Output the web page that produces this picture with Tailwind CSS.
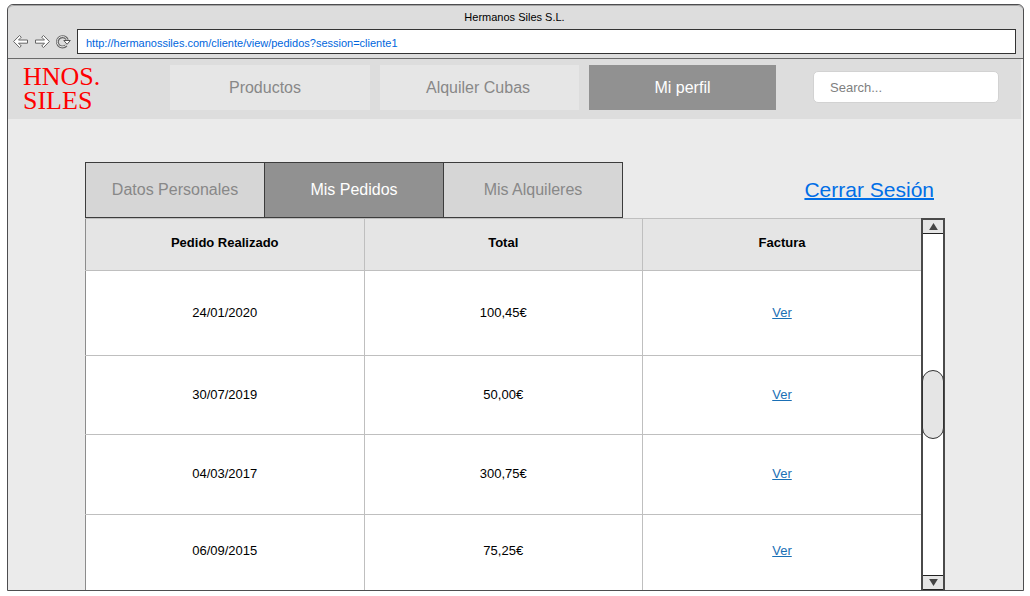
<!DOCTYPE html>
<html lang="es">
<head>
<meta charset="utf-8">
<title>Hermanos Siles S.L.</title>
<script src="https://cdn.jsdelivr.net/npm/@tailwindcss/browser@4"></script>
</head>
<body class="flex min-h-screen bg-white pt-1 pr-[6px] pb-[5px] pl-[7px] font-['Liberation_Sans',Arial,sans-serif] text-black">
<div class="flex flex-1 flex-col rounded-t-md border border-[#4d4d4f] bg-[#ebebeb]">
  <header class="rounded-t-md border-b border-[#6a6a6a] border-t border-t-[#a5a5a5] bg-[#dddddd] pr-[7px] pb-1 pl-[5px]">
    <p class="h-[23px] pt-[3px] text-center text-[11px] leading-4">Hermanos Siles S.L.</p>
    <div class="flex items-center">
      <button type="button" aria-label="Atrás" class="w-[21px]">
        <svg class="h-4 w-4" viewBox="0 0 16 16" fill="#fff" stroke="#666" stroke-width="1" stroke-linejoin="round"><path d="M6.500 1.500 .6 7.500l5.900 6L8.300 12 5.500 9.200H14.500V6H5.500l2.800-2.800z"/></svg>
      </button>
      <button type="button" aria-label="Adelante" class="w-[21px]">
        <svg class="h-4 w-4" viewBox="0 0 16 16" fill="#fff" stroke="#666" stroke-width="1" stroke-linejoin="round"><path d="M9.500 1.500l5.900 6-5.900 6L7.700 12l2.800-2.800H1.500V6h9L7.700 3.200z"/></svg>
      </button>
      <button type="button" aria-label="Recargar" class="w-[22px]">
        <svg class="h-4 w-4" viewBox="0 0 16 16" fill="none"><path d="M11.300 11.500A5.200 5.200 0 1 1 12.400 6" stroke="#666" stroke-width="3"/><path d="M11.100 11.300A5.200 5.200 0 1 1 12.400 6.500" stroke="#eee" stroke-width="1"/><path d="M8.800 6.500h6.500l-3.200 3.800z" fill="#fff" stroke="#555" stroke-linejoin="round"/></svg>
      </button>
      <input type="text" aria-label="Dirección" value="http://hermanossiles.com/cliente/view/pedidos?session=cliente1" class="h-[25px] min-w-0 flex-1 border border-[#333] bg-white px-2 pt-[2px] text-[11px] text-[#0066dd]">
    </div>
  </header>
  <nav class="mr-[2px] flex h-[60px] items-start bg-[#dddddd] pt-[6px] pr-[22px] pl-[15px]">
    <a href="#" class="w-[147px] font-['Liberation_Serif',serif] text-[26px] leading-6 text-[#ff0000]">HNOS.<br>SILES</a>
    <div class="flex gap-[10px] text-base text-[#888]">
      <button type="button" class="h-[45px] w-[200px] bg-[#e6e6e6] pr-[10px]">Productos</button>
      <button type="button" class="h-[45px] w-[199px] bg-[#e6e6e6] pt-px pr-[3px]">Alquiler Cubas</button>
      <button type="button" class="h-[45px] w-[187px] bg-[#919191] pt-px text-white">Mi perfil</button>
    </div>
    <input type="search" aria-label="Buscar" placeholder="Search..." class="mt-[6px] ml-auto h-8 w-[186px] rounded-[5px] border border-[#d2d2d2] bg-white px-4 text-[13px] placeholder:text-[#808080]">
  </nav>
  <main class="flex flex-1 flex-col pt-[43px] pr-[78px] pl-[77px]">
    <div class="flex items-start justify-between pr-[11px]">
      <div role="tablist" class="flex h-14 border-l border-[#3c3c3c] text-base text-[#888]">
        <button type="button" role="tab" aria-selected="false" class="w-[179px] border-y border-r border-[#3c3c3c] bg-[#d6d6d6]">Datos Personales</button>
        <button type="button" role="tab" aria-selected="true" class="w-[179px] border-y border-r border-[#3c3c3c] bg-[#919191] text-white">Mis Pedidos</button>
        <button type="button" role="tab" aria-selected="false" class="w-[179px] border-y border-r border-[#3c3c3c] bg-[#d6d6d6]">Mis Alquileres</button>
      </div>
      <a href="#" class="mt-3 text-[21px] leading-8 text-[#006ee6] underline decoration-2">Cerrar Sesión</a>
    </div>
    <div class="grid flex-1 grid-cols-[1fr_24px]">
      <table class="w-full table-fixed border-collapse border-l border-[#8c8c8c] bg-white text-center text-[13px]">
        <thead class="bg-[#e5e5e5]">
          <tr class="h-[52px] border-t border-b border-[#bfbfbf]">
            <th scope="col" class="border-r border-[#bfbfbf] pb-1">Pedido Realizado</th>
            <th scope="col" class="border-r border-[#bfbfbf] pb-1">Total</th>
            <th scope="col" class="pb-1">Factura</th>
          </tr>
        </thead>
        <tbody>
          <tr class="h-[85px] border-b border-[#bfbfbf]"><td class="border-r border-[#bfbfbf]">24/01/2020</td><td class="border-r border-[#bfbfbf]">100,45€</td><td><a href="#" class="text-[#1a6fb5] underline">Ver</a></td></tr>
          <tr class="h-[79px] border-b border-[#bfbfbf]"><td class="border-r border-[#bfbfbf]">30/07/2019</td><td class="border-r border-[#bfbfbf]">50,00€</td><td><a href="#" class="text-[#1a6fb5] underline">Ver</a></td></tr>
          <tr class="h-[80px] border-b border-[#bfbfbf]"><td class="border-r border-[#bfbfbf] pb-[2px]">04/03/2017</td><td class="border-r border-[#bfbfbf] pb-[2px]">300,75€</td><td class="pb-[2px]"><a href="#" class="text-[#1a6fb5] underline">Ver</a></td></tr>
          <tr class="h-[75px]"><td class="border-r border-[#bfbfbf] pb-1">06/09/2015</td><td class="border-r border-[#bfbfbf] pb-1">75,25€</td><td class="pb-1"><a href="#" class="text-[#1a6fb5] underline">Ver</a></td></tr>
        </tbody>
      </table>
      <div class="flex flex-col border-x-2 border-t-2 border-[#4a4a4a] bg-white">
        <button type="button" aria-label="Subir" class="flex h-[14px] items-center justify-center border-b border-[#222] bg-[#e5e5e5]"><svg class="h-[7px] w-[9px]" viewBox="0 0 10 8" fill="#444"><path d="M5 0 10 8H0z"/></svg></button>
        <div class="flex-[136]"></div>
        <div class="-mx-px h-[69px] rounded-full border border-[#333] bg-[#e5e5e5]"></div>
        <div class="flex-[136]"></div>
        <button type="button" aria-label="Bajar" class="flex h-[15px] items-center justify-center border-t border-b border-[#222] bg-[#e5e5e5]"><svg class="h-[7px] w-[9px]" viewBox="0 0 10 8" fill="#444"><path d="M0 0h10L5 8z"/></svg></button>
      </div>
    </div>
  </main>
</div>
</body>
</html>
